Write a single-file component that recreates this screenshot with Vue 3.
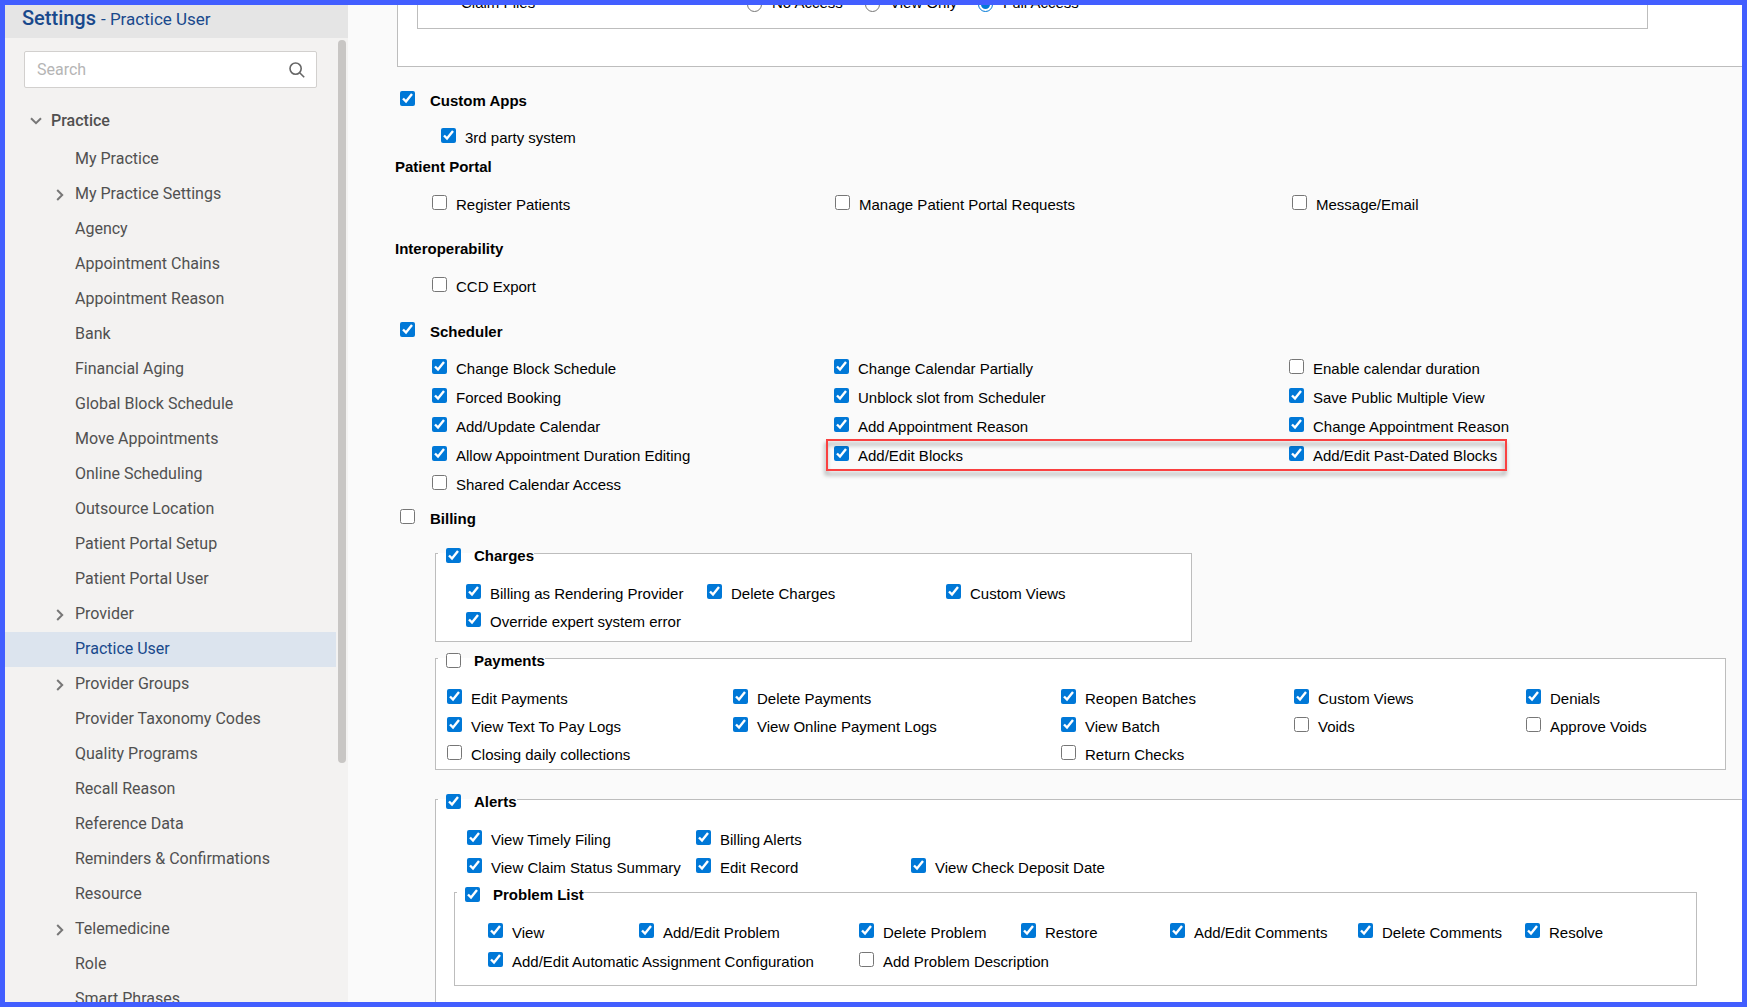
<script setup>
import { reactive, ref } from 'vue'

const search = ref('')
const claimAccess = ref('Full Access')
const accessLevels = ['No Access', 'View Only', 'Full Access']

const menu = [
  { name: 'My Practice' },
  { name: 'My Practice Settings', expandable: true },
  { name: 'Agency' },
  { name: 'Appointment Chains' },
  { name: 'Appointment Reason' },
  { name: 'Bank' },
  { name: 'Financial Aging' },
  { name: 'Global Block Schedule' },
  { name: 'Move Appointments' },
  { name: 'Online Scheduling' },
  { name: 'Outsource Location' },
  { name: 'Patient Portal Setup' },
  { name: 'Patient Portal User' },
  { name: 'Provider', expandable: true },
  { name: 'Practice User', active: true },
  { name: 'Provider Groups', expandable: true },
  { name: 'Provider Taxonomy Codes' },
  { name: 'Quality Programs' },
  { name: 'Recall Reason' },
  { name: 'Reference Data' },
  { name: 'Reminders & Confirmations' },
  { name: 'Resource' },
  { name: 'Telemedicine', expandable: true },
  { name: 'Role' },
  { name: 'Smart Phrases' },
]

// A right is [label, granted, grid column (optional)]
const rights = (list) => list.map(([label, on, column]) => ({ label, on, column }))

const sections = reactive({
  customApps: true,
  scheduler: true,
  billing: false,
  charges: true,
  payments: false,
  alerts: true,
  problems: true,
})

const customApps = reactive(rights([['3rd party system', true]]))

const portal = reactive(rights([
  ['Register Patients', false],
  ['Manage Patient Portal Requests', false],
  ['Message/Email', false],
]))

const interop = reactive(rights([['CCD Export', false]]))

const scheduler = reactive(rights([
  ['Change Block Schedule', true],
  ['Change Calendar Partially', true],
  ['Enable calendar duration', false],
  ['Forced Booking', true],
  ['Unblock slot from Scheduler', true],
  ['Save Public Multiple View', true],
  ['Add/Update Calendar', true],
  ['Add Appointment Reason', true],
  ['Change Appointment Reason', true],
  ['Allow Appointment Duration Editing', true],
  ['Add/Edit Blocks', true],
  ['Add/Edit Past-Dated Blocks', true],
  ['Shared Calendar Access', false],
]))

const charges = reactive(rights([
  ['Billing as Rendering Provider', true],
  ['Delete Charges', true],
  ['Custom Views', true],
  ['Override expert system error', true],
]))

const payments = reactive(rights([
  ['Edit Payments', true],
  ['Delete Payments', true],
  ['Reopen Batches', true],
  ['Custom Views', true],
  ['Denials', true],
  ['View Text To Pay Logs', true],
  ['View Online Payment Logs', true],
  ['View Batch', true],
  ['Voids', false],
  ['Approve Voids', false],
  ['Closing daily collections', false],
  ['Return Checks', false, '3'],
]))

const alerts = reactive(rights([
  ['View Timely Filing', true],
  ['Billing Alerts', true],
  ['View Claim Status Summary', true, '1'],
  ['Edit Record', true],
  ['View Check Deposit Date', true],
]))

const problems = reactive(rights([
  ['View', true],
  ['Add/Edit Problem', true],
  ['Delete Problem', true],
  ['Restore', true],
  ['Add/Edit Comments', true],
  ['Delete Comments', true],
  ['Resolve', true],
  ['Add/Edit Automatic Assignment Configuration', true, '1 / span 2'],
  ['Add Problem Description', false, '3 / span 2'],
]))
</script>

<template>
  <div class="page">
    <aside class="sidebar">
      <h1 class="title">Settings <span class="subtitle">- Practice User</span></h1>
      <div class="nav-area">
        <div class="nav">
          <div class="search">
            <input v-model="search" type="text" placeholder="Search" aria-label="Search" />
            <button type="button" aria-label="Run search">
              <svg width="16" height="16" viewBox="0 0 16 16" fill="none" stroke="#666" stroke-width="1.6">
                <circle cx="6.6" cy="6.6" r="5.6" />
                <path d="M10.7 10.7 15.2 15.2" />
              </svg>
            </button>
          </div>
          <a href="#" class="root">
            <svg width="12" height="8" viewBox="0 0 12 8" fill="none" stroke="#777" stroke-width="2">
              <path d="M1 1.2 6 6.2 11 1.2" />
            </svg>
            Practice
          </a>
          <a v-for="item in menu" :key="item.name" href="#" class="item" :class="{ active: item.active }">
            <span class="arrow">
              <svg v-if="item.expandable" width="8" height="12" viewBox="0 0 8 12" fill="none" stroke="#777" stroke-width="2">
                <path d="M1.2 1 6.2 6 1.2 11" />
              </svg>
            </span>
            {{ item.name }}
          </a>
        </div>
        <div class="thumb"></div>
      </div>
    </aside>

    <main class="content">
      <div class="files-box">
        <div class="files-inner">
          <span>Claim Files</span>
          <label v-for="level in accessLevels" :key="level" class="radio">
            <input v-model="claimAccess" type="radio" name="claim-files" :value="level" />{{ level }}
          </label>
        </div>
      </div>

      <label class="right heading first"><input v-model="sections.customApps" type="checkbox" />Custom Apps</label>
      <div class="grid custom-grid">
        <label v-for="r in customApps" :key="r.label" class="right"><input v-model="r.on" type="checkbox" />{{ r.label }}</label>
      </div>

      <h2 class="plain">Patient Portal</h2>
      <div class="grid portal-grid">
        <label v-for="r in portal" :key="r.label" class="right"><input v-model="r.on" type="checkbox" />{{ r.label }}</label>
      </div>

      <h2 class="plain spaced">Interoperability</h2>
      <div class="grid portal-grid">
        <label v-for="r in interop" :key="r.label" class="right"><input v-model="r.on" type="checkbox" />{{ r.label }}</label>
      </div>

      <label class="right heading scheduler"><input v-model="sections.scheduler" type="checkbox" />Scheduler</label>
      <div class="grid scheduler-grid">
        <label v-for="r in scheduler" :key="r.label" class="right"><input v-model="r.on" type="checkbox" />{{ r.label }}</label>
        <div class="highlight"></div>
      </div>

      <label class="right heading billing"><input v-model="sections.billing" type="checkbox" />Billing</label>
      <div class="billing-body">
        <fieldset class="charges">
          <legend><label><input v-model="sections.charges" type="checkbox" />Charges</label></legend>
          <div class="rows charges-grid">
            <label v-for="r in charges" :key="r.label" class="right"><input v-model="r.on" type="checkbox" />{{ r.label }}</label>
          </div>
        </fieldset>

        <fieldset class="payments">
          <legend><label><input v-model="sections.payments" type="checkbox" />Payments</label></legend>
          <div class="rows payments-grid">
            <label v-for="r in payments" :key="r.label" class="right" :style="{ gridColumn: r.column }"><input v-model="r.on" type="checkbox" />{{ r.label }}</label>
          </div>
        </fieldset>

        <fieldset class="alerts">
          <legend><label><input v-model="sections.alerts" type="checkbox" />Alerts</label></legend>
          <div class="rows alerts-grid">
            <label v-for="r in alerts" :key="r.label" class="right" :style="{ gridColumn: r.column }"><input v-model="r.on" type="checkbox" />{{ r.label }}</label>
          </div>
          <fieldset class="problems">
            <legend><label><input v-model="sections.problems" type="checkbox" />Problem List</label></legend>
            <div class="rows problems-grid">
              <label v-for="r in problems" :key="r.label" class="right" :style="{ gridColumn: r.column }"><input v-model="r.on" type="checkbox" />{{ r.label }}</label>
            </div>
          </fieldset>
        </fieldset>
      </div>
    </main>
  </div>
</template>

<style>
body {
  margin: 0;
}
</style>

<style scoped>
.page {
  box-sizing: border-box;
  display: flex;
  height: 100vh;
  border: 5px solid #425eff;
  overflow: hidden;
  background: #fafafa;
}

/* Sidebar */
.sidebar {
  flex: none;
  display: flex;
  flex-direction: column;
  width: 343px;
  background: #f3f2f1;
  color: #505050;
  font: 16px/33px Roboto, sans-serif;
}
.title {
  flex: none;
  height: 33px;
  margin: 0;
  padding-left: 17px;
  background: #e5e5e5;
  color: #19498c;
  font-size: 20px;
  font-weight: 500;
  line-height: 27px;
}
.subtitle {
  font-size: 17px;
  font-weight: 400;
}
.nav-area {
  flex: 1;
  display: flex;
  min-height: 0;
}
.nav {
  flex: 1;
  overflow: hidden;
}
.search {
  box-sizing: border-box;
  display: flex;
  align-items: center;
  height: 37px;
  margin: 13px 19px 15px;
  padding: 0 11px 0 12px;
  border: 1px solid #d2d0ce;
  border-radius: 2px;
  background: #fff;
}
.search input {
  flex: 1;
  min-width: 0;
  padding: 0;
  border: 0;
  outline: 0;
  background: none;
  font: 16px/20px Roboto, sans-serif;
}
.search input::placeholder {
  color: #b5b5b5;
}
.search button {
  display: flex;
  padding: 0;
  border: 0;
  background: none;
}
.root {
  display: flex;
  align-items: center;
  gap: 9px;
  height: 35px;
  margin-bottom: 4px;
  padding-left: 25px;
  color: inherit;
  font-weight: 500;
  text-decoration: none;
}
.item {
  display: flex;
  height: 35px;
  padding-left: 51px;
  color: inherit;
  text-decoration: none;
  white-space: nowrap;
}
.item.active {
  background: #dce4ee;
  color: #19498c;
}
.arrow {
  display: flex;
  align-items: center;
  width: 19px;
}
.thumb {
  width: 8px;
  height: 75%;
  margin: 2px 2px 0;
  border-radius: 4px;
  background: #c8c6c4;
}

/* Permissions */
.content {
  flex: 1;
  min-width: 0;
  padding-left: 47px;
  overflow: hidden;
  color: #000;
  font: 15px/29px "Liberation Sans", Arial, sans-serif;
}
.content input {
  flex: none;
  width: 15px;
  height: 15px;
  margin: 0;
  accent-color: #0078d7;
}
.files-box {
  margin: -11px 0 19px 2px;
  padding: 0 94px 37px 19px;
  border: solid #bdbdbd;
  border-width: 0 0 1px 1px;
  background: #fff;
}
.files-inner {
  display: grid;
  grid-template-columns: 286px 118px 113px 1fr;
  padding: 0 0 16px 43px;
  border: solid #bdbdbd;
  border-width: 0 1px 1px;
  line-height: 18px;
}
.radio {
  display: flex;
  align-items: flex-end;
  gap: 10px;
}
.right {
  display: flex;
  align-items: baseline;
  gap: 9px;
  white-space: nowrap;
}
.heading {
  gap: 15px;
  padding-left: 5px;
  font-weight: 700;
}
.plain {
  margin: 0;
  font-size: 15px;
  font-weight: 700;
}
.spaced {
  margin-top: 15px;
}
.scheduler {
  margin-top: 16px;
}
.billing {
  margin-top: 5px;
}
.grid {
  display: grid;
  margin-top: 8px;
  padding-left: 37px;
}
.custom-grid {
  padding-left: 46px;
}
.portal-grid {
  grid-template-columns: 403fr 457fr 450fr;
  margin-top: 9px;
}
.scheduler-grid {
  position: relative;
  grid-template-columns: 402fr 455fr 453fr;
}
.highlight {
  position: absolute;
  grid-area: 4 / 2 / 5 / 4;
  inset: -2px 235px -1px -8px;
  border: 2px solid #fa4040;
  filter: drop-shadow(-1px 4px 2px rgba(0, 0, 0, 0.4));
  pointer-events: none;
}
.billing-body {
  display: flex;
  flex-direction: column;
  margin-top: 10px;
  padding-left: 40px;
  line-height: 28px;
}
fieldset {
  box-sizing: border-box;
  min-width: 0;
  margin: 0;
  padding: 0 0 0 2px;
  border: 1px solid #bdbdbd;
  background: #fff;
}
legend {
  padding: 4px 0 0 8px;
  font-weight: 700;
  line-height: 17px;
}
legend label {
  display: flex;
  align-items: center;
  gap: 13px;
}
.rows {
  display: grid;
  padding-top: 16px;
}
.charges {
  width: 100%;
  max-width: 757px;
  padding-bottom: 5px;
}
.charges-grid {
  grid-template-columns: 241fr 239fr 245fr;
  padding-left: 28px;
}
.payments {
  margin: 6px 16px 0 0;
}
.payments-grid {
  grid-template-columns: 286fr 328fr 233fr 232fr 199fr;
  padding-left: 9px;
}
.alerts {
  margin-top: 19px;
  padding-bottom: 24px;
  border-right: 0;
}
.alerts-grid {
  grid-template-columns: 229fr 215fr 831fr;
  padding-left: 29px;
}
.problems {
  margin: 0 45px 0 16px;
  padding-bottom: 9px;
}
.problems-grid {
  grid-template-columns: 151fr 220fr 162fr 149fr 188fr 167fr 171fr;
  padding: 15px 0 0 31px;
  line-height: 29px;
}
</style>
